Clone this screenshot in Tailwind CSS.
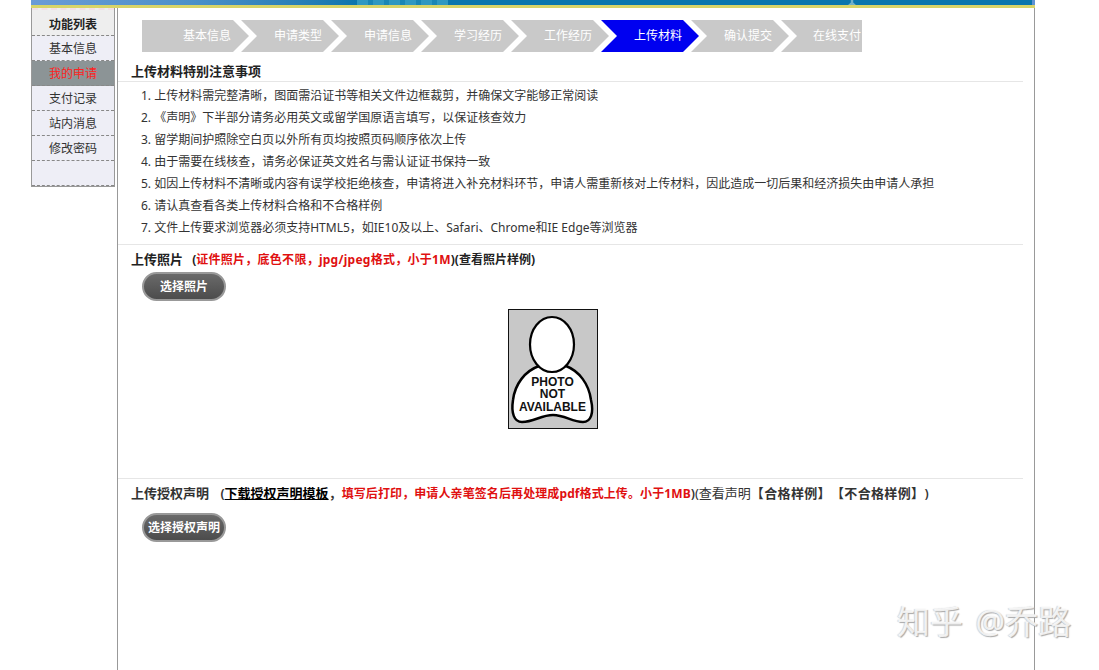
<!DOCTYPE html>
<html lang="zh-CN">
<head>
  <meta charset="UTF-8" />
  <title>上传材料</title>
  <script src="https://cdn.jsdelivr.net/npm/@tailwindcss/browser@4"></script>
</head>
<body class="bg-white h-[670px] overflow-hidden relative font-['Noto_Sans','Noto_Sans_CJK_SC',sans-serif] text-xs text-[#333] [text-spacing-trim:space-all]">
  <div class="ml-[31px] w-[1004px]">
    <!-- top banner, only its lower edge is visible -->
    <div class="h-[8px] border-b-[3px] border-[#d8d468] bg-[#0a76ad] flex">
      <div class="w-[326px] h-full bg-gradient-to-r from-[#6b9bd6] via-[#4a90c8] to-[#0a76ad]"></div>
      <div class="w-[91px] h-full bg-[repeating-linear-gradient(90deg,#2f98c0_0,#2f98c0_11px,#1a86b4_11px,#1a86b4_16px)]"></div>
      <div class="w-[400px]"></div>
      <div class="w-[8px] h-full bg-[#6fb0c8] [clip-path:polygon(35%_0,65%_0,65%_50%,100%_100%,0_100%,35%_50%)]"></div>
      <div class="flex-1"></div>
      <div class="w-[3px] h-full bg-[#5f93d3]"></div>
    </div>

    <div class="flex items-start">
      <!-- left menu -->
      <ul class="w-[84px] h-[179px] border border-t-0 border-[#999] bg-[#eeeef6] text-center text-[#333] shrink-0">
        <li class="h-[28px] pt-[3px] bg-[#eeeeee] border-t-2 border-[#f3dfe6] border-b border-dashed border-b-[#888] font-bold text-[#222] leading-[24px]">功能列表</li>
        <li class="h-[25px] leading-[26px] border-b border-dashed border-[#888]">基本信息</li>
        <li class="h-[25px] leading-[26px] border-b border-dashed border-[#888] bg-[#8c9496] text-[#f22]">我的申请</li>
        <li class="h-[25px] leading-[26px] border-b border-dashed border-[#888]">支付记录</li>
        <li class="h-[25px] leading-[26px] border-b border-dashed border-[#888]">站内消息</li>
        <li class="h-[25px] leading-[26px] border-b border-dashed border-[#888]">修改密码</li>
        <li class="h-[25px] border-b border-dashed border-[#888]"></li>
      </ul>

      <!-- main panel -->
      <main class="ml-[2px] w-[918px] h-[662px] border-x border-[#999] shrink-0">
        <!-- steps -->
        <div class="flex pt-[12px] pl-[24px] text-white">
          <div class="h-[32px] w-[107px] pl-[41px] leading-[32px] bg-[#c9c9c9] [clip-path:polygon(0_0,91px_0,107px_50%,91px_100%,0_100%)]">基本信息</div>
          <div class="h-[32px] w-[98px] -ml-[8px] pl-[33px] leading-[32px] bg-[#c9c9c9] [clip-path:polygon(0_0,82px_0,98px_50%,82px_100%,0_100%,16px_50%)]">申请类型</div>
          <div class="h-[32px] w-[98px] -ml-[8px] pl-[33px] leading-[32px] bg-[#c9c9c9] [clip-path:polygon(0_0,82px_0,98px_50%,82px_100%,0_100%,16px_50%)]">申请信息</div>
          <div class="h-[32px] w-[98px] -ml-[8px] pl-[33px] leading-[32px] bg-[#c9c9c9] [clip-path:polygon(0_0,82px_0,98px_50%,82px_100%,0_100%,16px_50%)]">学习经历</div>
          <div class="h-[32px] w-[98px] -ml-[8px] pl-[33px] leading-[32px] bg-[#c9c9c9] [clip-path:polygon(0_0,82px_0,98px_50%,82px_100%,0_100%,16px_50%)]">工作经历</div>
          <div class="h-[32px] w-[98px] -ml-[8px] pl-[33px] leading-[32px] bg-[#0000f0] [clip-path:polygon(0_0,82px_0,98px_50%,82px_100%,0_100%,16px_50%)]">上传材料</div>
          <div class="h-[32px] w-[98px] -ml-[8px] pl-[33px] leading-[32px] bg-[#c9c9c9] [clip-path:polygon(0_0,82px_0,98px_50%,82px_100%,0_100%,16px_50%)]">确认提交</div>
          <div class="h-[32px] w-[81px] -ml-[8px] pl-[32px] leading-[32px] whitespace-nowrap bg-[#c9c9c9] [clip-path:polygon(0_0,100%_0,100%_100%,0_100%,16px_50%)]">在线支付</div>
        </div>

        <!-- notes -->
        <h2 class="mt-[10px] pl-[13px] text-[13px] leading-[19px] font-bold text-[#222] border-b border-[#e6e6e6] mr-[11px] h-[20px]">上传材料特别注意事项</h2>
        <ol class="pl-[23px] pt-[3px] leading-[22px] text-[#333] border-b border-[#e6e6e6] mr-[11px] h-[163px]">
          <li>1. 上传材料需完整清晰，图面需沿证书等相关文件边框裁剪，并确保文字能够正常阅读</li>
          <li>2. 《声明》下半部分请务必用英文或留学国原语言填写，以保证核查效力</li>
          <li>3. 留学期间护照除空白页以外所有页均按照页码顺序依次上传</li>
          <li>4. 由于需要在线核查，请务必保证英文姓名与需认证证书保持一致</li>
          <li>5. 如因上传材料不清晰或内容有误学校拒绝核查，申请将进入补充材料环节，申请人需重新核对上传材料，因此造成一切后果和经济损失由申请人承担</li>
          <li>6. 请认真查看各类上传材料合格和不合格样例</li>
          <li>7. 文件上传要求浏览器必须支持HTML5，如IE10及以上、Safari、Chrome和IE Edge等浏览器</li>
        </ol>

        <!-- photo -->
        <section class="h-[234px] border-b border-[#e6e6e6] mr-[11px]">
          <p class="pl-[13px] pt-[5px] leading-[18px] font-bold text-[#222] whitespace-nowrap"><span class="text-[13px]">上传照片</span> <span class="ml-[6px]">(</span><span class="text-[#e01010] tracking-[0.27px]">证件照片，底色不限，jpg/jpeg格式，小于1M</span>)(查看照片样例)</p>
          <button class="block ml-[24px] mt-[3px] w-[84px] h-[29px] rounded-[15px] border-2 border-[#999] bg-gradient-to-b from-[#6a6a6a] to-[#4c4c4c] text-white font-bold">选择照片</button>
          <div class="mt-[8px] ml-[390px] w-[90px] h-[120px]">
            <svg width="90" height="120" viewBox="0 0 90 120">
              <rect x="0.5" y="0.5" width="89" height="119" fill="#c8c8c8" stroke="#111" />
              <path d="M31 57C17 62 7 75 5 91C3 104 6 113 14 113C26 113 33 106 45 106C57 106 64 113 75 113C83 113 86 104 83 91C81 75 71 62 58 57Z" fill="#fff" stroke="#000" stroke-width="2.5" />
              <ellipse cx="44" cy="35.5" rx="22" ry="27.5" fill="#fff" stroke="#000" stroke-width="2.2" />
              <g font-family="Liberation Sans" font-size="12" font-weight="700" text-anchor="middle" fill="#111">
                <text x="44.5" y="77">PHOTO</text>
                <text x="44.5" y="89">NOT</text>
                <text x="44.5" y="102">AVAILABLE</text>
              </g>
            </svg>
          </div>
        </section>

        <!-- declaration -->
        <section>
          <p class="pl-[13px] pt-[5px] leading-[18px] font-semibold text-[13px] text-[#333] whitespace-nowrap">上传授权声明 <span class="ml-[8px]">(</span><a class="underline font-bold text-black">下载授权声明模板</a>，<span class="text-xs font-bold text-[#e01010] tracking-[0.1px]">填写后打印，申请人亲笔签名后再处理成pdf格式上传。小于1MB</span>)<span class="font-normal">(查看声明</span><span class="font-semibold tracking-[0.35px]">【合格样例】【不合格样例】)</span></p>
          <button class="block ml-[24px] mt-[11px] w-[84px] h-[29px] rounded-[15px] border-2 border-[#999] bg-gradient-to-b from-[#6a6a6a] to-[#4c4c4c] text-white font-bold whitespace-nowrap">选择授权声明</button>
        </section>
      </main>
    </div>
  </div>

  <!-- watermark -->
  <div class="absolute left-[897px] top-[601px] text-[33px] leading-[42px] [word-spacing:4px] whitespace-nowrap text-white/80 [text-shadow:1px_1px_1px_#a8a8a8,-1px_0_1px_#d4d4d4]">知乎 @乔路</div>
</body>
</html>
